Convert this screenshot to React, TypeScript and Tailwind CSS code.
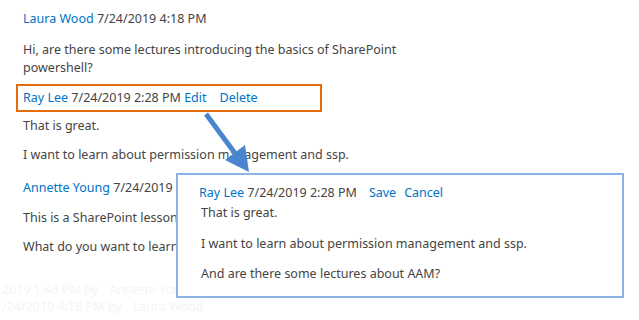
import React from 'react';

const link = 'text-[#0072c6]';

const Comment = ({ name, date, children }: { name: string; date: string; children?: React.ReactNode }) => (
  <div className="h-[18px] whitespace-nowrap">
    <span className={link}>{name}</span> {date}
    {children}
  </div>
);

export default function App() {
  return (
    <div className="relative w-[639px] h-[320px] overflow-hidden bg-white text-[12.5px] leading-[18px] text-[#444] font-['Noto_Sans',sans-serif]">
      <div className="flex flex-col pt-[10px] px-[16px]">
        <div className="px-[7px]">
          <Comment name="Laura Wood" date="7/24/2019 4:18 PM" />
          <p className="mt-[13px] w-[400px]">Hi, are there some lectures introducing the basics of SharePoint powershell?</p>
        </div>

        <div className="mt-[7px] w-[306px] h-[28px] border-2 border-[#e46c0a] px-[5px] py-[3px]">
          <Comment name="Ray Lee" date="7/24/2019 2:28 PM">
            {' '}<span className={link}>Edit</span>
            <span className={`${link} ml-[13px]`}>Delete</span>
          </Comment>
        </div>

        <div className="px-[7px]">
          <p className="mt-[5px]">That is great.</p>
          <p className="mt-[11px]">I want to learn about permission management and ssp.</p>
          <div className="mt-[15px]">
            <Comment name="Annette Young" date="7/24/2019 1:46 PM" />
          </div>
          <p className="mt-[12px]">This is a SharePoint lesson.</p>
          <p className="mt-[11px]">What do you want to learn about SharePoint?</p>
        </div>

        <div className="mt-[25px] -ml-[14px] text-[#f4f4f4] leading-[17px]">
          <div className="whitespace-nowrap">2019 1:46 PM by <span className="ml-2">Annette Young</span></div>
          <div className="whitespace-nowrap">/24/2019 4:18 PM by <span className="ml-2">Laura Wood</span></div>
        </div>
      </div>

      {/* arrow */}
      <svg className="absolute left-0 top-0" width="639" height="320" viewBox="0 0 639 320">
        <line x1="206" y1="114" x2="237" y2="156" stroke="#4a86d0" strokeWidth="5" />
        <polygon points="249,172 225,160 245,145" fill="#4a86d0" />
      </svg>

      {/* edit overlay */}
      <div className="absolute left-[176px] top-[173px] w-[448px] h-[125px] bg-white border-2 border-[#8db3e2] pl-[21px] pr-4 pt-[9px]">
        <div className="h-[18px] whitespace-nowrap">
          <span className={link}>Ray Lee</span> 7/24/2019 2:28 PM
          <span className={`${link} ml-[12px]`}>Save</span>
          <span className={`${link} ml-[8px]`}>Cancel</span>
        </div>
        <div className="pl-[2px]">
          <p className="mt-[2px]">That is great.</p>
          <p className="mt-[13px]">I want to learn about permission management and ssp.</p>
          <p className="mt-[12px]">And are there some lectures about AAM?</p>
        </div>
      </div>
    </div>
  );
}
